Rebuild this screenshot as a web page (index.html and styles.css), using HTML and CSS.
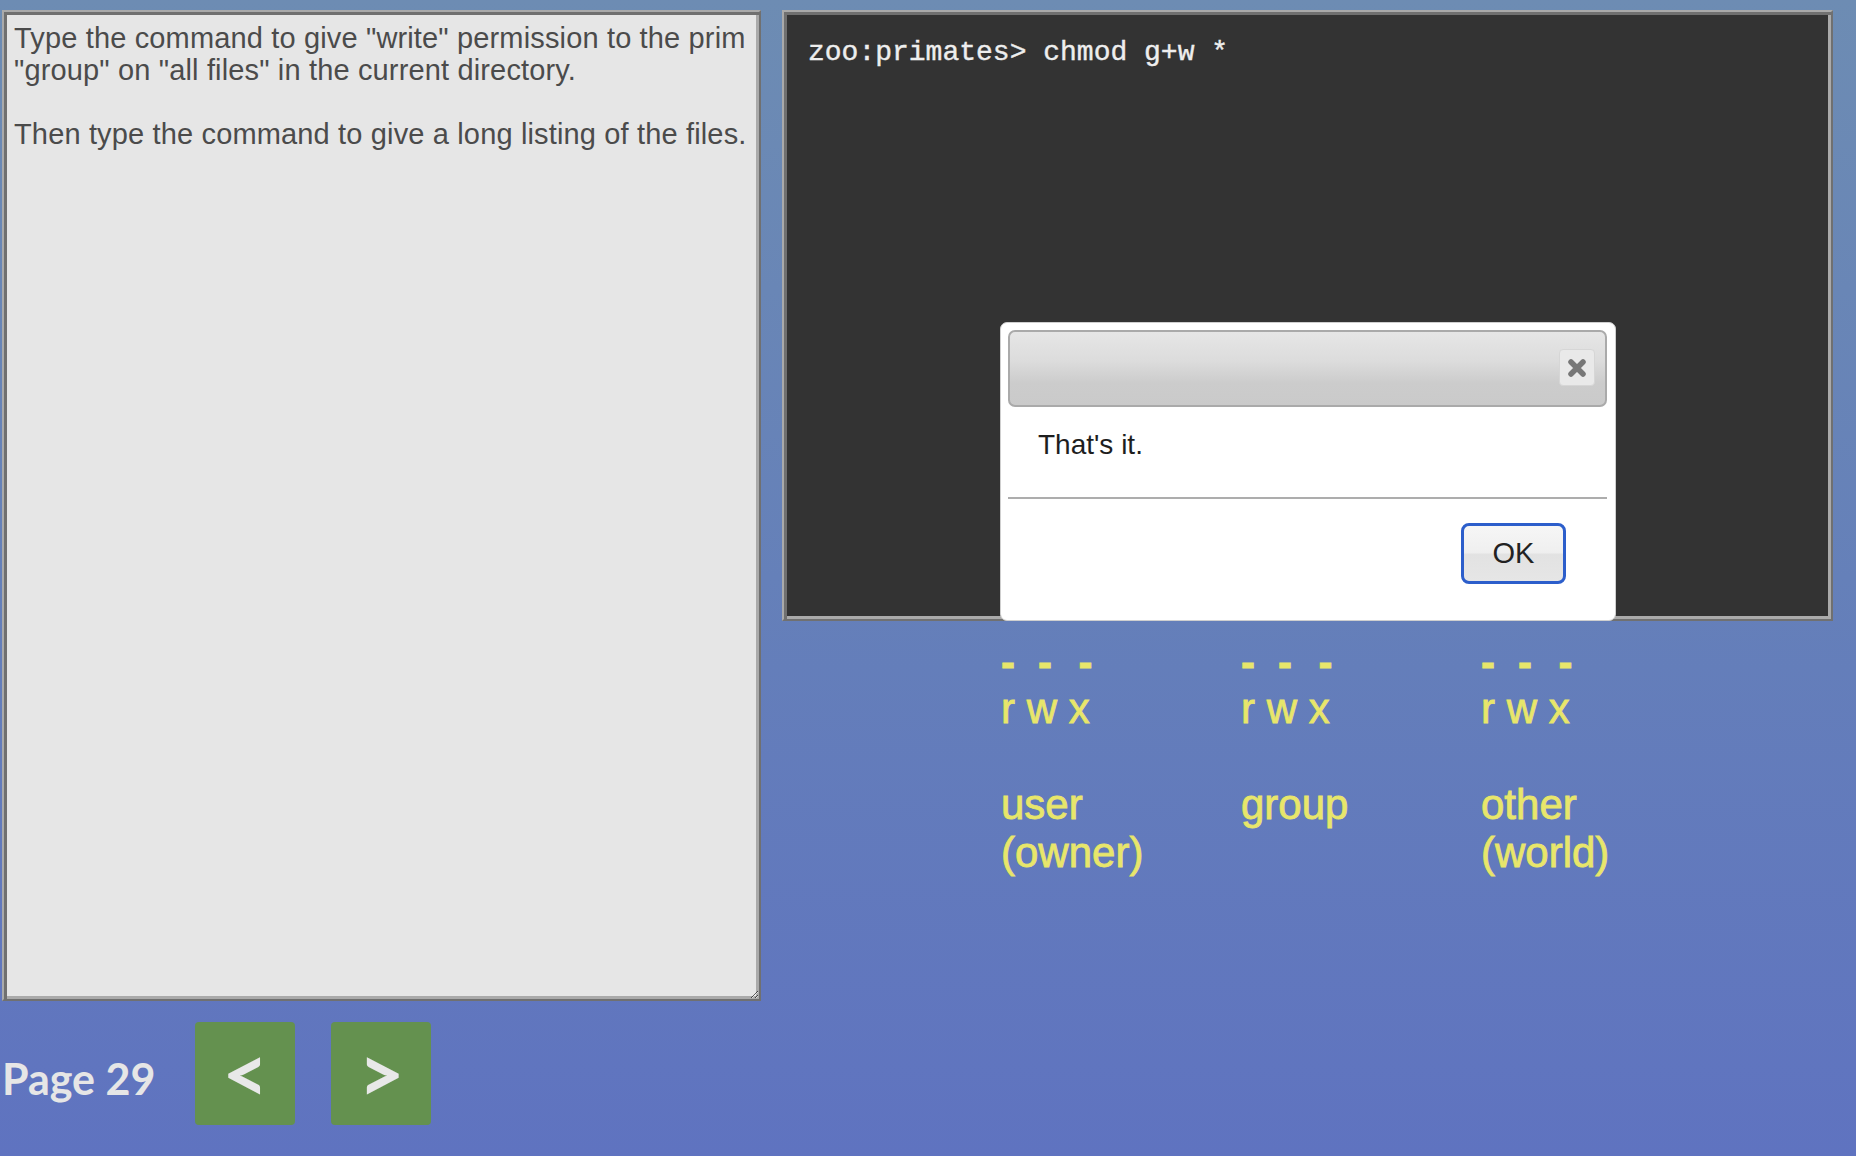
FILE: index.html
```html
<!DOCTYPE html>
<html lang="en">
<head>
<meta charset="utf-8">
<title>Page 29</title>
<link rel="stylesheet" href="styles.css">
</head>
<body>
<div class="page">
  <div class="left">
    <textarea class="prompt" wrap="off" spellcheck="false">Type the command to give "write" permission to the prim
"group" on "all files" in the current directory.

Then type the command to give a long listing of the files.</textarea>
    <div class="nav">
      <span class="page-no">Page 29</span>
      <button class="nav-btn" type="button">&lt;</button>
      <button class="nav-btn" type="button">&gt;</button>
    </div>
  </div>
  <div class="right">
    <div class="terminal">zoo:primates&gt; chmod g+w *</div>
    <div class="perms">
      <div class="perm">
        <div class="perm-line bits"><span class="bit bit-r">-</span><span class="bit bit-w">-</span><span class="bit bit-x">-</span></div>
        <div class="perm-line">r w x</div>
        <div class="perm-line">&nbsp;</div>
        <div class="perm-line">user</div>
        <div class="perm-line">(owner)</div>
      </div>
      <div class="perm">
        <div class="perm-line bits"><span class="bit bit-r">-</span><span class="bit bit-w">-</span><span class="bit bit-x">-</span></div>
        <div class="perm-line">r w x</div>
        <div class="perm-line">&nbsp;</div>
        <div class="perm-line">group</div>
      </div>
      <div class="perm">
        <div class="perm-line bits"><span class="bit bit-r">-</span><span class="bit bit-w">-</span><span class="bit bit-x">-</span></div>
        <div class="perm-line">r w x</div>
        <div class="perm-line">&nbsp;</div>
        <div class="perm-line">other</div>
        <div class="perm-line">(world)</div>
      </div>
    </div>
    <div class="dialog">
      <div class="dialog-title">
        <span class="dialog-close">
          <svg width="20" height="20" viewBox="0 0 20 20"><path d="M4 4 L16 16 M16 4 L4 16" stroke="#777" stroke-width="5.5" stroke-linecap="round" fill="none"/></svg>
        </span>
      </div>
      <div class="dialog-body">That's it.</div>
      <div class="dialog-buttons">
        <button class="ok-btn" type="button">OK</button>
      </div>
    </div>
  </div>
</div>
</body>
</html>
```

FILE: styles.css
```css
html, body {
  margin: 0;
  padding: 0;
}

body {
  height: 1156px;
  overflow: hidden;
  background: linear-gradient(to bottom, #6d8cb3 0%, #6580b9 50%, #5f73c0 100%);
  font-family: "Liberation Sans", Arial, sans-serif;
}

.page {
  display: flex;
  align-items: flex-start;
  gap: 21px;
  padding: 10px 0 0 2px;
}

.left {
  display: flex;
  flex-direction: column;
  width: 759px;
}

.prompt {
  display: block;
  width: 759px;
  height: 991px;
  box-sizing: border-box;
  margin: 0;
  border: 2px solid;
  border-color: #aaaaaa #707070 #707070 #aaaaaa;
  box-shadow: inset 3px 3px 0 #707070, inset -3px -3px 0 #aaaaaa;
  background: #e6e6e6;
  color: #4b4b4b;
  font-family: "Liberation Sans", Arial, sans-serif;
  font-size: 29px;
  line-height: 32px;
  letter-spacing: 0.15px;
  padding: 10px 6px 6px 10px;
  overflow: hidden;
  white-space: pre;
  outline: none;
}

.nav {
  display: flex;
  align-items: center;
  margin-top: 21px;
}

.page-no {
  font-family: Lato, "Liberation Sans", sans-serif;
  font-weight: 700;
  font-size: 43px;
  color: #e6e6e6;
  margin-top: 10px;
  margin-right: 40px;
}

.nav-btn {
  width: 100px;
  height: 103px;
  margin: 0 36px 0 0;
  padding: 0 0 4px 0;
  border: none;
  border-radius: 4px;
  background: #64914f;
  color: #e8e8e8;
  font-family: Lato, "Liberation Sans", sans-serif;
  font-weight: 700;
  font-size: 80px;
  line-height: 1;
}

.right {
  position: relative;
  width: 1051px;
}

.terminal {
  width: 1051px;
  height: 611px;
  box-sizing: border-box;
  border: 2px solid;
  border-color: #aaaaaa #707070 #707070 #aaaaaa;
  box-shadow: inset 3px 3px 0 #707070, inset -3px -3px 0 #aaaaaa;
  background: #333333;
  color: #eeeeee;
  font-family: "Liberation Mono", "Courier New", monospace;
  font-size: 28px;
  -webkit-text-stroke: 0.4px #eeeeee;
  padding: 25px 24px;
  white-space: pre;
}

.perms {
  display: grid;
  grid-template-columns: repeat(3, 240px);
  margin: 16px 0 0 219px;
  font-family: "Liberation Sans", Arial, sans-serif;
  font-size: 42px;
  line-height: 48px;
  color: #e8e66b;
  -webkit-text-stroke: 0.8px #e8e66b;
}

.perm-line {
  white-space: pre;
}

.bits {
  display: flex;
  font-weight: 700;
  padding-top: 2px;
  height: 46px;
}

.bit {
  display: inline-block;
  text-align: center;
}

.bit-r {
  width: 14px;
}

.bit-w {
  width: 30px;
  margin-left: 15px;
}

.bit-x {
  width: 21px;
  margin-left: 15px;
}

.dialog {
  position: absolute;
  left: 218px;
  top: 312px;
  width: 616px;
  box-sizing: border-box;
  background: #ffffff;
  border: 1px solid #cfcfcf;
  border-radius: 7px;
  padding: 7px 8px 0 7px;
}

.dialog-title {
  height: 77px;
  box-sizing: border-box;
  border: 2px solid #aaaaaa;
  border-radius: 7px;
  background: linear-gradient(to bottom, #e6e6e6 0%, #dcdcdc 40%, #cccccc 70%, #cacaca 100%);
  display: flex;
  align-items: center;
  justify-content: flex-end;
  padding: 0 10px 2px 0;
}

.dialog-close {
  width: 36px;
  height: 37px;
  box-sizing: border-box;
  border: 1px solid #d6d6d6;
  border-radius: 4px;
  background: #e9e9e9;
  display: flex;
  align-items: center;
  justify-content: center;
}

.dialog-body {
  padding: 22px 0 36px 30px;
  font-size: 28px;
  line-height: 32px;
  color: #1e1e1e;
}

.dialog-buttons {
  border-top: 2px solid #adadad;
  display: flex;
  justify-content: flex-end;
  padding: 24px 41px 36px 0;
}

.ok-btn {
  width: 105px;
  height: 61px;
  box-sizing: border-box;
  margin: 0;
  padding: 0;
  border: 3px solid #2c5ecb;
  border-radius: 8px;
  background: linear-gradient(to bottom, #f6f6f6 0%, #efefef 48%, #e2e2e2 52%, #e6e6e6 100%);
  color: #222222;
  font-family: "Liberation Sans", Arial, sans-serif;
  font-size: 29px;
}
```
